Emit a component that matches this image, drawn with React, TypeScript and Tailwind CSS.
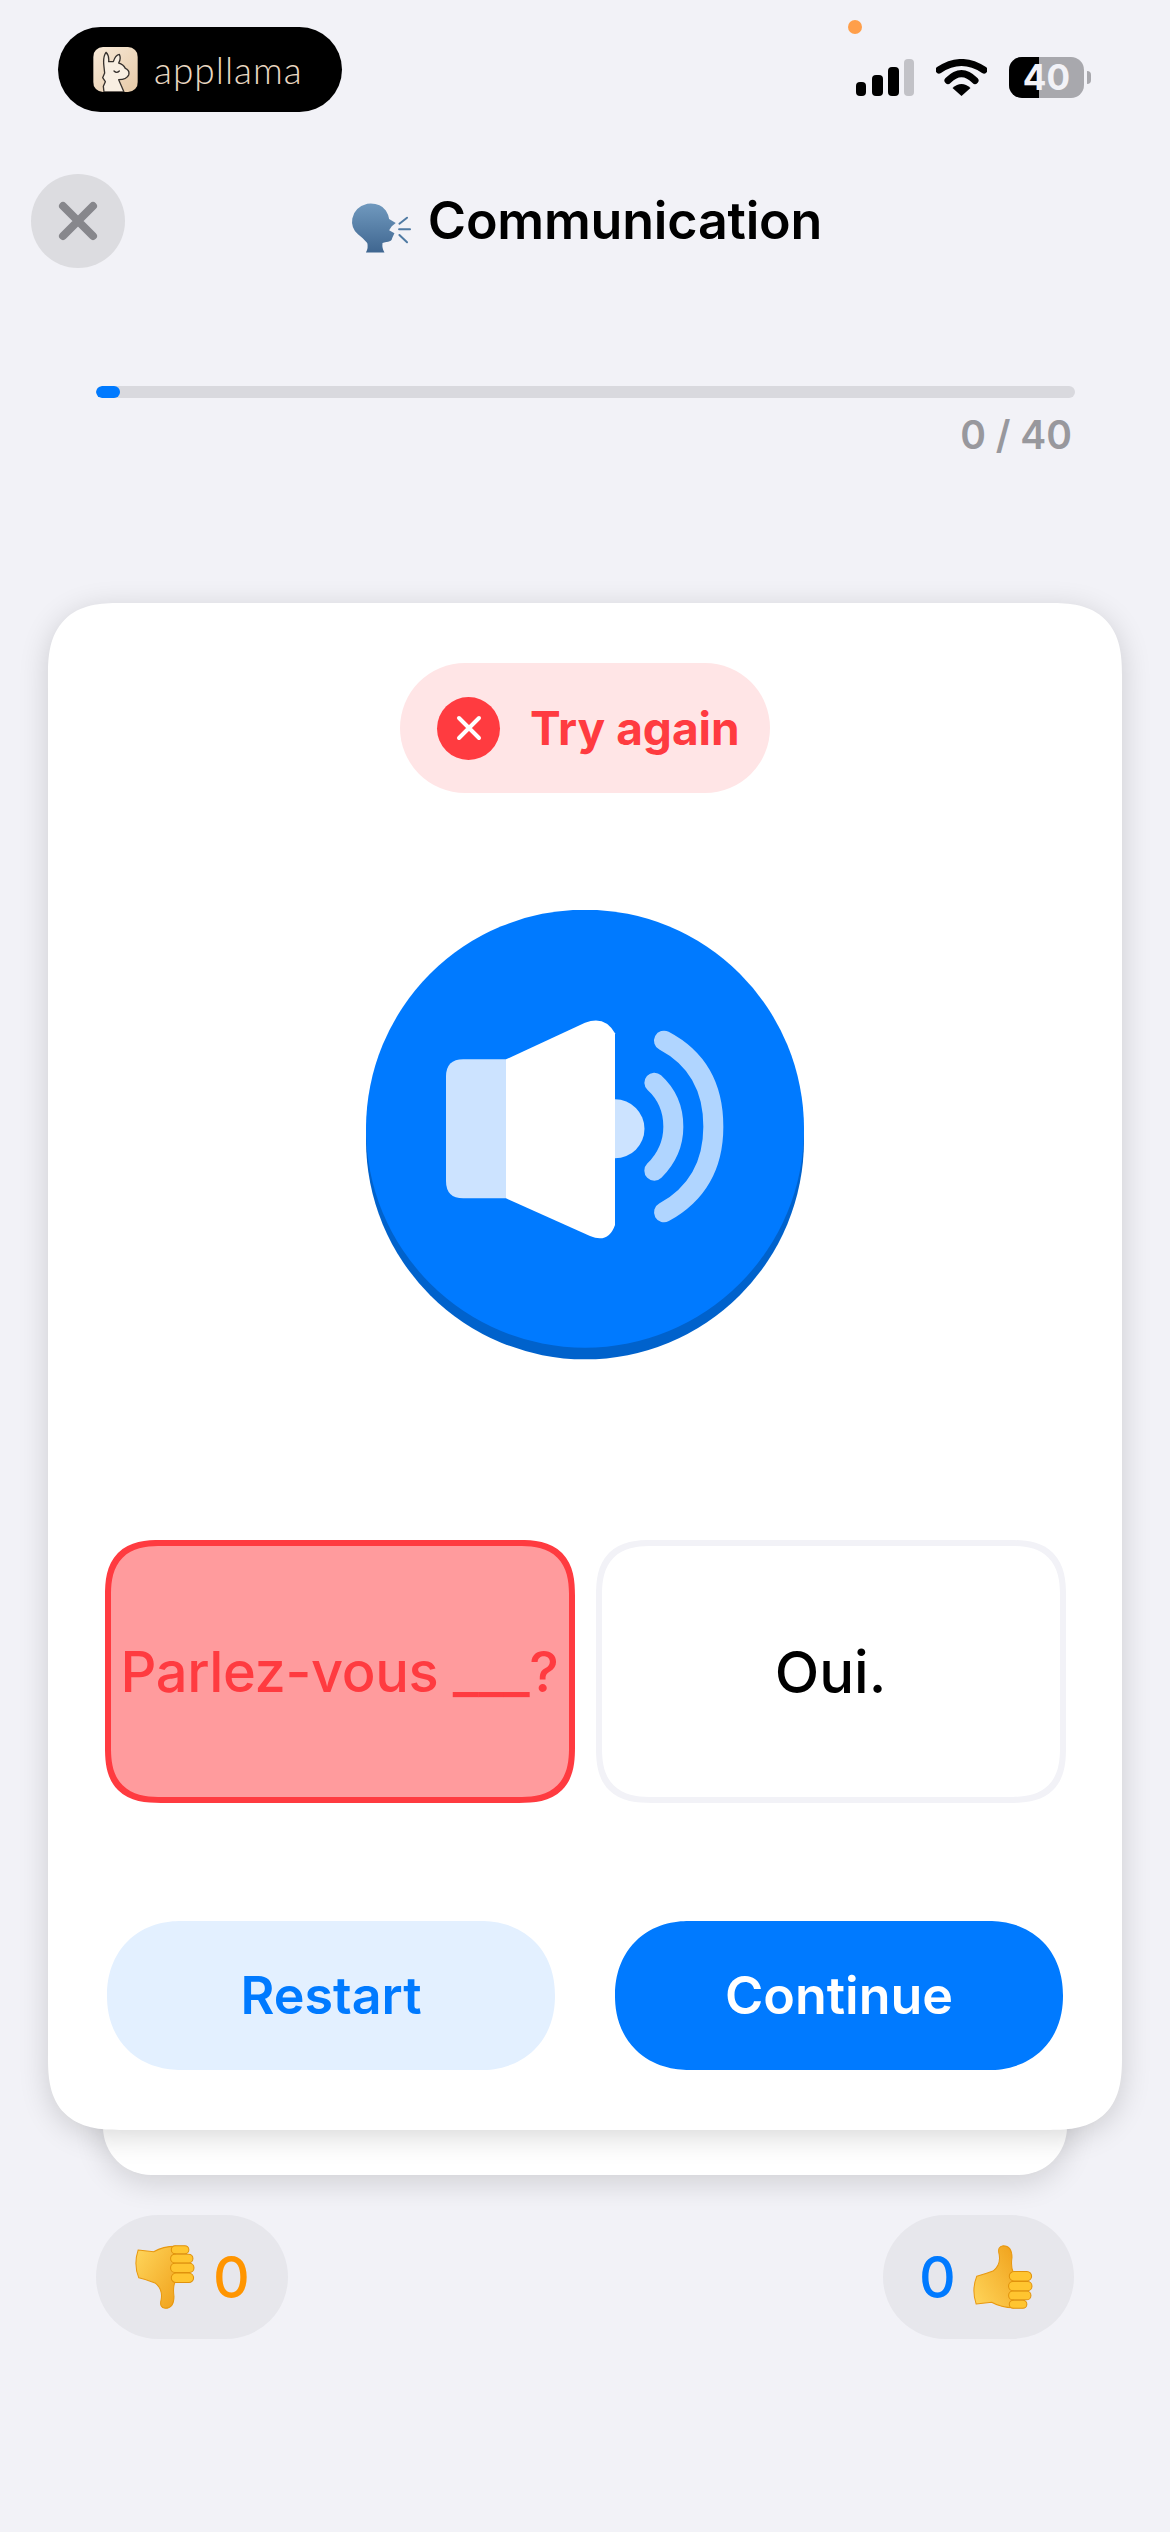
const answers = [
  { label: "Parlez-vous ___?", wrong: true },
  { label: "Oui.", wrong: false },
];

function LlamaIcon() {
  return (
    <svg viewBox="0 0 133 135" className="h-[45px] w-[45px] rounded-[10px]">
      <defs>
        <linearGradient id="llamaBg" x1="0" y1="0" x2="1" y2="1">
          <stop offset="0" stopColor="#f8ead9" />
          <stop offset="1" stopColor="#e6c9a6" />
        </linearGradient>
      </defs>
      <rect width="133" height="135" fill="url(#llamaBg)" />
      <path d="M32 135 L30 118 L36 104 L28 92 L34 78 L32 60 Q28 30 38 16 Q48 26 46 44 L60 44 Q66 24 78 22 Q84 34 76 48 Q90 52 96 64 Q110 70 106 84 Q100 98 76 98 Q84 116 92 135 Z" fill="#f9efe2" stroke="#37322e" strokeWidth="4" strokeLinejoin="round" />
      <path d="M62 72 Q70 80 78 72" fill="none" stroke="#37322e" strokeWidth="4" strokeLinecap="round" />
    </svg>
  );
}

function SignalIcon() {
  return (
    <svg viewBox="0 0 58 37" className="h-[37px] w-[58px]">
      <rect x="0" y="23" width="10" height="14" rx="4" fill="#000" />
      <rect x="16" y="16" width="11" height="21" rx="4" fill="#000" />
      <rect x="32" y="8" width="11" height="29" rx="4" fill="#000" />
      <rect x="48" y="0" width="10" height="37" rx="4" fill="#c2c2c7" />
    </svg>
  );
}

function WifiIcon() {
  return (
    <svg viewBox="0 0 51 37" className="h-[37px] w-[51px]">
      <path d="M3 11 Q25.5 -4 48 11" fill="none" stroke="#000" strokeWidth="7" strokeLinecap="round" />
      <path d="M12 21.5 Q25.5 8 39 21.5" fill="none" stroke="#000" strokeWidth="7" strokeLinecap="round" />
      <path d="M25.5 37 L16.5 29 Q25.5 21 34.5 29 Z" fill="#000" />
    </svg>
  );
}

function Battery() {
  return (
    <div className="flex items-center">
      <div className="relative flex h-[41px] w-[75px] overflow-hidden rounded-[13px] bg-[#a8a8ad]">
        <div className="h-full w-[30px] bg-black" />
        <span className="absolute inset-0 flex items-center justify-center text-[35px] font-bold leading-none text-[#f2f2f7]">
          40
        </span>
      </div>
      <div className="ml-[3px] h-[13px] w-[4px] rounded-r-full bg-[#a8a8ad]" />
    </div>
  );
}

function SpeakingHead() {
  return (
    <svg viewBox="60 60 190 165" className="h-[55px] w-[63px]">
      <defs>
        <linearGradient id="headFill" x1="0" y1="0" x2="0" y2="1">
          <stop offset="0" stopColor="#7099be" />
          <stop offset="1" stopColor="#3f6690" />
        </linearGradient>
      </defs>
      <path
        d="M108 215 Q116 200 112 186 Q100 172 84 160 Q62 140 67 112 Q74 78 112 68 Q150 64 168 88 Q176 100 178 114 L198 126 L186 136 L178 148 L194 157 L188 170 Q186 184 166 184 L158 186 Q156 202 164 215 Z"
        fill="url(#headFill)"
      />
      <path d="M209 128 L232 110 M208 145 L241 145 M209 162 L232 184" stroke="#4f7aa3" strokeWidth="6" strokeLinecap="round" />
    </svg>
  );
}

function SpeakerDisc() {
  return (
    <svg viewBox="0 0 1314 1350" className="h-[450px] w-[438px]">
      <g transform="translate(-78 -90)">
        <circle cx="735" cy="781" r="657" fill="#0062cc" />
        <circle cx="735" cy="746" r="657" fill="#007aff" />
        <path d="M498 538 L370 538 Q318 538 318 590 L318 903 Q318 955 370 955 L498 955 Z" fill="#cce3ff" />
        <path d="M498 538 L735 428 Q795 405 825 460 L825 1035 Q805 1092 750 1068 L498 955 Z" fill="#fff" />
        <path d="M825 658 A88 88 0 0 1 825 835 Z" fill="#cce3ff" />
        <path d="M943 608 Q1000 660 1000 740 Q1000 815 943 872" fill="none" stroke="#b0d5ff" strokeWidth="60" strokeLinecap="round" />
        <path d="M972 482 Q1120 560 1120 740 Q1120 915 972 997" fill="none" stroke="#b0d5ff" strokeWidth="60" strokeLinecap="round" />
      </g>
    </svg>
  );
}

function ThumbDown({ className }: { className?: string }) {
  return (
    <svg viewBox="170 135 180 195" className={className}>
      <defs>
        <linearGradient id="thumbFill" x1="0" y1="0" x2="1" y2="1">
          <stop offset="0" stopColor="#ffd65c" />
          <stop offset="1" stopColor="#f0a21c" />
        </linearGradient>
      </defs>
      <path
        d="M182 153 L228 158 Q256 142 292 142 L292 245 Q284 262 288 290 Q288 325 262 325 Q244 322 250 300 Q256 268 232 250 Q206 240 184 235 Q168 195 182 153 Z"
        fill="url(#thumbFill)"
        stroke="#e8980f"
        strokeWidth="3"
      />
      <rect x="280" y="140" width="52" height="24" rx="12" fill="#ffc530" stroke="#e0920c" strokeWidth="3" />
      <rect x="278" y="165" width="66" height="26" rx="13" fill="#ffc530" stroke="#e0920c" strokeWidth="3" />
      <rect x="278" y="192" width="69" height="27" rx="13" fill="#ffc530" stroke="#e0920c" strokeWidth="3" />
      <rect x="280" y="221" width="66" height="28" rx="14" fill="#ffc530" stroke="#e0920c" strokeWidth="3" />
    </svg>
  );
}

export default function App() {
  return (
    <div className="relative h-[2532px] w-[1170px] overflow-hidden bg-[#f2f2f7] font-['Inter',sans-serif]">
      <div className="absolute left-[848px] top-[20px] h-[14px] w-[14px] rounded-full bg-[#ff9f4a]" />

      <div className="flex items-start justify-between pl-[58px] pr-[79px] pt-[27px]">
        <div className="flex h-[85px] w-[284px] items-center rounded-full bg-black pl-[35px]">
          <LlamaIcon />
          <span className="ml-[16px] font-['Lato',sans-serif] text-[37px] font-light leading-none tracking-[1px] text-[#ead8c2]">
            appllama
          </span>
        </div>
        <div className="mt-[30px] flex items-center">
          <SignalIcon />
          <div className="ml-[22px]">
            <WifiIcon />
          </div>
          <div className="ml-[22px]">
            <Battery />
          </div>
        </div>
      </div>

      <div className="mt-[62px] grid grid-cols-[94px_1fr_94px] items-center px-[31px]">
        <button className="flex h-[94px] w-[94px] items-center justify-center rounded-full bg-[#dcdce0]">
          <svg viewBox="0 0 40 40" className="h-[40px] w-[40px]">
            <path d="M5 5 L35 35 M35 5 L5 35" stroke="#87878c" strokeWidth="8" strokeLinecap="round" />
          </svg>
        </button>
        <div className="flex items-center justify-center gap-[15px] pl-[2px]">
          <div className="pt-[14px]">
            <SpeakingHead />
          </div>
          <h1 className="text-[52px] font-semibold leading-none tracking-[-0.2px] text-black">Communication</h1>
        </div>
      </div>

      <div className="ml-[96px] mr-[95px] mt-[118px] h-[12px] overflow-hidden rounded-full bg-[#d9d9de]">
        <div className="h-full w-[24px] rounded-full bg-[#007aff]" />
      </div>
      <p className="mr-[98px] mt-[14px] text-right text-[39px] font-semibold leading-[46px] text-[#98989d]">0 / 40</p>

      <div className="relative mx-[48px] mt-[145px]">
        <div className="absolute -bottom-[45px] left-[55px] right-[55px] h-[200px] rounded-b-[48px] bg-white shadow-[0_8px_30px_rgba(0,0,0,0.14)]" />
        <div className="relative flex h-[1527px] flex-col items-center rounded-[72px] bg-white pt-[60px] shadow-[0_6px_30px_rgba(0,0,0,0.16)] [corner-shape:superellipse(1.4)]">
          <div className="flex h-[130px] w-[370px] items-center rounded-full bg-[#ffe5e6] pl-[37px]">
            <div className="flex h-[63px] w-[63px] items-center justify-center rounded-full bg-[#ff3b40]">
              <svg viewBox="0 0 28 28" className="h-[28px] w-[28px]">
                <path d="M4 4 L24 24 M24 4 L4 24" stroke="#fff" strokeWidth="4" strokeLinecap="round" />
              </svg>
            </div>
            <span className="ml-[30px] text-[46px] font-bold leading-none text-[#ff3b40]">Try again</span>
          </div>

          <div className="mt-[117px]">
            <SpeakerDisc />
          </div>

          <div className="mt-[180px] flex gap-[21px]">
            {answers.map((answer) => (
              <div
                key={answer.label}
                className={
                  answer.wrong
                    ? "flex h-[263px] w-[470px] items-center justify-center rounded-[56px] border-[6px] border-[#ff3b40] bg-[#ff9b9d] text-[56px] font-medium leading-none tracking-[-0.4px] text-[#ff3b40] [corner-shape:superellipse(1.4)]"
                    : "flex h-[263px] w-[470px] items-center justify-center rounded-[56px] border-[6px] border-[#f2f2f7] bg-white text-[58px] font-medium leading-none text-black [corner-shape:superellipse(1.4)]"
                }
              >
                {answer.label}
              </div>
            ))}
          </div>

          <div className="mt-[118px] flex gap-[60px]">
            <button className="h-[149px] w-[448px] rounded-[74px] bg-[#e3f0ff] text-[52px] font-semibold text-[#007aff] [corner-shape:superellipse(1.1)]">
              Restart
            </button>
            <button className="h-[149px] w-[448px] rounded-[74px] bg-[#007aff] text-[52px] font-semibold text-white [corner-shape:superellipse(1.1)]">
              Continue
            </button>
          </div>
        </div>
      </div>

      <div className="mt-[85px] flex justify-between px-[96px]">
        <div className="flex h-[124px] w-[192px] items-center rounded-full bg-[#e7e7ec] pl-[38px]">
          <ThumbDown className="h-[66px] w-[61px]" />
          <span className="ml-[18px] text-[57px] font-medium leading-none text-[#ff9500]">0</span>
        </div>
        <div className="flex h-[124px] w-[191px] items-center rounded-full bg-[#e7e7ec] pl-[36px]">
          <span className="text-[57px] font-medium leading-none text-[#007aff]">0</span>
          <ThumbDown className="ml-[16px] h-[66px] w-[61px] -scale-y-100" />
        </div>
      </div>
    </div>
  );
}
